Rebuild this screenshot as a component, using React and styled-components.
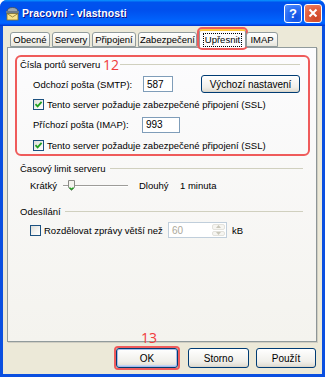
import React from "react";
import styled, { createGlobalStyle } from "styled-components";

const GlobalStyle = createGlobalStyle`
  html, body {
    margin: 0;
    padding: 0;
    background: #ffffff;
  }
  body {
    font-family: "Liberation Sans", Arial, sans-serif;
    font-size: 9.5px;
    color: #000;
  }
`;

const Window = styled.div`
  width: 325px;
  height: 377px;
  box-sizing: border-box;
  display: flex;
  flex-direction: column;
  background: #0a4fe0;
  border-radius: 7px 7px 0 0;
  overflow: hidden;
`;

const TitleBar = styled.div`
  height: 26px;
  flex: none;
  display: flex;
  align-items: center;
  padding: 0 3px 0 5px;
  background: linear-gradient(
    to bottom,
    #0997ff 0%,
    #0053ee 9%,
    #0050ee 40%,
    #0066ff 86%,
    #005bff 92%,
    #003dd7 97%,
    #003dd7 100%
  );
`;

const TitleText = styled.span`
  margin-left: 2px;
  color: #fff;
  font-weight: bold;
  font-size: 10.5px;
  letter-spacing: 0.1px;
  text-shadow: 1px 1px 0 #0f1089;
  flex: 1;
`;

const CaptionButton = styled.div`
  width: 18px;
  height: 19px;
  box-sizing: border-box;
  border: 1px solid #fff;
  border-radius: 3px;
  margin-left: 2px;
  display: flex;
  align-items: center;
  justify-content: center;
  color: #fff;
  font-weight: bold;
  font-size: 13px;
  background: ${(p) =>
    p.$close
      ? "radial-gradient(circle at 70% 75%, #cc4627 0%, #e3613f 55%, #f08a6c 100%)"
      : "radial-gradient(circle at 70% 75%, #0f4ee0 0%, #2a6ef6 55%, #5a93fb 100%)"};
`;

const Body = styled.div`
  flex: 1;
  margin: 0 3px 3px;
  background: #ece9d8;
  display: flex;
  flex-direction: column;
  padding: 3px 5px 4px 4px;
`;

const TabRow = styled.div`
  height: 18px;
  display: flex;
  align-items: flex-end;
  padding-left: 3px;
  position: relative;
  z-index: 1;
`;

const Tab = styled.div`
  position: relative;
  width: ${(p) => p.$w}px;
  height: ${(p) => (p.$active ? 19 : 15)}px;
  margin-right: ${(p) => (p.$active ? 0 : 2)}px;
  margin-bottom: ${(p) => (p.$active ? -1 : 0)}px;
  box-sizing: border-box;
  border: 1px solid #919b9c;
  border-bottom: ${(p) => (p.$active ? "none" : "1px solid #919b9c")};
  border-top: ${(p) => (p.$active ? "2px solid #ffc83c" : "1px solid #919b9c")};
  border-radius: 3px 3px 0 0;
  background: ${(p) =>
    p.$active ? "#fcfcfe" : "linear-gradient(to bottom, #ffffff 0%, #f3f2ed 60%, #e8e6dd 100%)"};
  display: flex;
  align-items: center;
  justify-content: center;

  &::after {
    content: "";
    display: ${(p) => (p.$marked ? "block" : "none")};
    position: absolute;
    left: -3px;
    right: -3px;
    top: -4px;
    bottom: -2px;
    border: 2px solid #ef5b5b;
    border-radius: 5px;
  }
`;

const FocusText = styled.span`
  outline: 1px dotted #000;
  outline-offset: 0;
  padding: 0 1px;
  line-height: 12px;
`;

const Panel = styled.div`
  height: 295px;
  box-sizing: border-box;
  border: 1px solid #919b9c;
  border-right-color: #8d9596;
  box-shadow: 1px 1px 0 #d0cec3;
  background: linear-gradient(to bottom, #fcfcfe 0%, #f4f3ee 100%);
  display: flex;
  flex-direction: column;
`;

const Highlight = styled.div`
  position: relative;
  margin: 7px 0 0 7px;
  width: 295px;
  box-sizing: border-box;
  border: 2px solid #ef5b5b;
  border-radius: 6px;
  padding: 0 8px 2px 3px;
`;

const Marker = styled.span`
  position: absolute;
  left: ${(p) => p.$x}px;
  top: ${(p) => p.$y}px;
  font-family: "Open Sans", "Liberation Sans", sans-serif;
  font-size: 14px;
  line-height: 14px;
  color: #f03c3c;
  background: ${(p) => (p.$bg ? p.$bg : "transparent")};
  padding: 0 1px;
`;

const GroupHead = styled.div`
  height: 14px;
  display: flex;
  align-items: center;
  gap: 4px;
  margin-top: ${(p) => p.$top || 0}px;

  &::after {
    content: "";
    flex: 1;
    height: 1px;
    background: #d0d0bf;
    margin-top: 1px;
  }
`;

const Section = styled.div`
  padding: 0 13px 0 12px;
`;

const Row = styled.div`
  display: flex;
  align-items: center;
  height: ${(p) => p.$h}px;
  margin-top: ${(p) => p.$top}px;
  padding-left: ${(p) => p.$indent}px;
`;

const FieldLabel = styled.span`
  width: ${(p) => p.$w}px;
  flex: none;
  white-space: nowrap;
`;

const TextBox = styled.div`
  width: ${(p) => p.$w}px;
  height: 16px;
  box-sizing: border-box;
  border: 1px solid ${(p) => (p.$disabled ? "#c0cedb" : "#7f9db9")};
  background: #fff;
  color: ${(p) => (p.$disabled ? "#aca899" : "#000")};
  display: flex;
  align-items: center;
  padding-left: 3px;
  font-size: 10px;
  position: relative;
`;

const SpinBox = styled.div`
  position: absolute;
  right: 1px;
  top: 1px;
  bottom: 1px;
  width: 13px;
  display: flex;
  flex-direction: column;
  gap: 1px;
`;

const SpinHalf = styled.div`
  flex: 1;
  border: 1px solid #e3e2dc;
  border-radius: 2px;
  background: #f6f5f1;
  display: flex;
  align-items: center;
  justify-content: center;
`;

const XpButton = styled.div`
  width: ${(p) => p.$w}px;
  height: ${(p) => p.$h || 20}px;
  box-sizing: border-box;
  margin-left: ${(p) => p.$left || 0}px;
  border: 1px solid #003c74;
  border-radius: 3px;
  background: linear-gradient(to bottom, #ffffff 0%, #f0efea 70%, #e3e0d6 92%, #d6d0c5 100%);
  box-shadow: ${(p) => (p.$default ? "inset 0 0 0 1px #a6bdea, inset 0 -1px 0 1px #c4d5f4" : "none")};
  display: flex;
  align-items: center;
  justify-content: center;
  font-size: 10px;
  flex: none;
`;

const CheckRow = styled.label`
  display: flex;
  align-items: center;
  gap: 2px;
  height: 14px;
  margin-top: ${(p) => p.$top}px;
  padding-left: ${(p) => p.$indent}px;
  white-space: nowrap;
`;

const Box = styled.span`
  width: 11px;
  height: 11px;
  box-sizing: border-box;
  border: 1px solid #1c5180;
  background: linear-gradient(135deg, #dcdcd7 0%, #f5f5f3 60%, #ffffff 100%);
  display: flex;
  align-items: center;
  justify-content: center;
  flex: none;
  margin-right: 1px;
`;

const SliderTrack = styled.div`
  position: relative;
  width: 65px;
  height: 11px;
  margin-right: 11px;
  flex: none;

  &::before {
    content: "";
    position: absolute;
    left: 0;
    right: 0;
    top: 5px;
    height: 1px;
    background: #9d9c99;
    border-bottom: 1px solid #ffffff;
  }
`;

const Thumb = styled.svg`
  position: absolute;
  left: 5px;
  top: 0;
`;

const Footer = styled.div`
  display: flex;
  justify-content: flex-end;
  align-items: center;
  height: 24px;
  margin-top: 4px;
  margin-right: 1px;
  gap: 7px;
`;

const ButtonHighlight = styled.div`
  position: relative;
  border: 2px solid #ef5b5b;
  border-radius: 4px;
  margin-right: -2px;
`;

function Check({ on }) {
  return (
    <Box>
      {on && (
        <svg width="9" height="9" viewBox="0 0 9 9">
          <path d="M1.5 4.2 L3.6 6.4 L7.6 1.8" fill="none" stroke="#21a121" strokeWidth="1.8" />
        </svg>
      )}
    </Box>
  );
}

function AppIcon() {
  return (
    <svg width="15" height="15" viewBox="0 0 15 15">
      <path d="M2 6 Q2 1.5 7.5 1.5 Q13 1.5 13 6 Z" fill="#9aa6b2" stroke="#3e4a58" strokeWidth="0.8" />
      <rect x="1" y="5" width="13" height="2" fill="#6e7b88" />
      <rect x="2" y="7.5" width="11" height="6.5" fill="#f8e38e" stroke="#8a7327" strokeWidth="0.8" />
      <path d="M2 7.5 L7.5 11 L13 7.5" fill="none" stroke="#8a7327" strokeWidth="0.8" />
    </svg>
  );
}

export default function App() {
  return (
    <>
      <GlobalStyle />
      <Window>
        <TitleBar>
          <AppIcon />
          <TitleText>Pracovní - vlastnosti</TitleText>
          <CaptionButton>?</CaptionButton>
          <CaptionButton $close>
            <svg width="10" height="10" viewBox="0 0 10 10">
              <path d="M1.5 1.5 L8.5 8.5 M8.5 1.5 L1.5 8.5" stroke="#fff" strokeWidth="2" />
            </svg>
          </CaptionButton>
        </TitleBar>

        <Body>
          <TabRow>
            <Tab $w={40}>Obecné</Tab>
            <Tab $w={38}>Servery</Tab>
            <Tab $w={44}>Připojení</Tab>
            <Tab $w={59}>Zabezpečení</Tab>
            <Tab $w={47} $active $marked>
              <FocusText>Upřesnit</FocusText>
            </Tab>
            <Tab $w={32}>IMAP</Tab>
          </TabRow>

          <Panel>
            <Highlight>
              <Marker $x={85} $y={1} $bg="#fcfcfe">12</Marker>
              <GroupHead $top={0}>Čísla portů serveru</GroupHead>
              <Row $h={18} $top={4} $indent={13}>
                <FieldLabel $w={110}>Odchozí pošta (SMTP):</FieldLabel>
                <TextBox $w={37}>587</TextBox>
                <XpButton $w={99} $h={18} $left={28}>Výchozí nastavení</XpButton>
              </Row>
              <CheckRow $top={4} $indent={13}>
                <Check on />
                Tento server požaduje zabezpečené připojení (SSL)
              </CheckRow>
              <Row $h={17} $top={5} $indent={13}>
                <FieldLabel $w={109}>Příchozí pošta (IMAP):</FieldLabel>
                <TextBox $w={38}>993</TextBox>
              </Row>
              <CheckRow $top={5} $indent={13}>
                <Check on />
                Tento server požaduje zabezpečené připojení (SSL)
              </CheckRow>
            </Highlight>

            <Section>
              <GroupHead $top={5}>Časový limit serveru</GroupHead>
              <Row $h={15} $top={3} $indent={10}>
                <FieldLabel $w={33}>Krátký</FieldLabel>
                <SliderTrack>
                  <Thumb width="7" height="11" viewBox="0 0 7 11">
                    <path d="M0.5 0.5 H6.5 V7.5 L3.5 10.5 L0.5 7.5 Z" fill="#f4f3ee" stroke="#8a8a86" />
                    <path d="M1.5 7.5 L3.5 9.5 L5.5 7.5" fill="none" stroke="#21a121" strokeWidth="1.2" />
                  </Thumb>
                </SliderTrack>
                <FieldLabel $w={41}>Dlouhý</FieldLabel>
                <span>1 minuta</span>
              </Row>

              <GroupHead $top={11}>Odesílání</GroupHead>
              <Row $h={16} $top={4} $indent={10}>
                <Check />
                <FieldLabel $w={124} style={{ marginLeft: 2 }}>
                  Rozdělovat zprávy větší než
                </FieldLabel>
                <TextBox $w={59} $disabled>
                  60
                  <SpinBox>
                    <SpinHalf>
                      <svg width="5" height="3" viewBox="0 0 5 3">
                        <path d="M0 3 L2.5 0 L5 3 Z" fill="#c9c7ba" />
                      </svg>
                    </SpinHalf>
                    <SpinHalf>
                      <svg width="5" height="3" viewBox="0 0 5 3">
                        <path d="M0 0 L2.5 3 L5 0 Z" fill="#c9c7ba" />
                      </svg>
                    </SpinHalf>
                  </SpinBox>
                </TextBox>
                <span style={{ marginLeft: 5 }}>kB</span>
              </Row>
            </Section>
          </Panel>

          <Footer>
            <ButtonHighlight>
              <Marker $x={24} $y={-17}>13</Marker>
              <XpButton $w={62} $default>OK</XpButton>
            </ButtonHighlight>
            <XpButton $w={61} style={{ marginLeft: 3 }}>Storno</XpButton>
            <XpButton $w={60}>Použít</XpButton>
          </Footer>
        </Body>
      </Window>
    </>
  );
}
